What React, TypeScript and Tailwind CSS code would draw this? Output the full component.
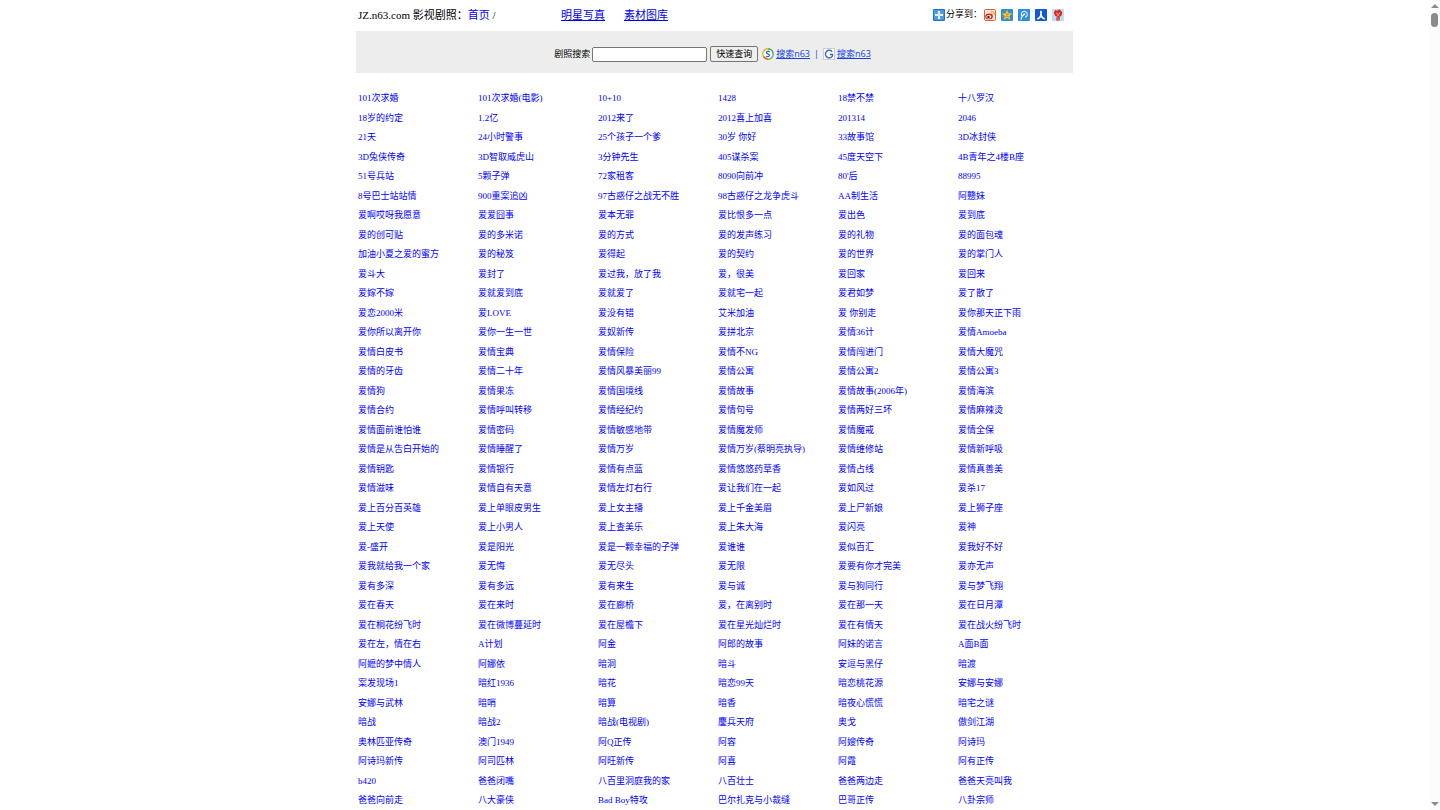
const rows: string[][] = [
  ['101次求婚', '101次求婚(电影)', '10+10', '1428', '18禁不禁', '十八罗汉'],
  ['18岁的约定', '1.2亿', '2012来了', '2012喜上加喜', '201314', '2046'],
  ['21天', '24小时警事', '25个孩子一个爹', '30岁 你好', '33故事馆', '3D冰封侠'],
  ['3D兔侠传奇', '3D智取威虎山', '3分钟先生', '405谋杀案', '45度天空下', '4B青年之4楼B座'],
  ['51号兵站', '5颗子弹', '72家租客', '8090向前冲', "80'后", '88995'],
  ['8号巴士站站情', '900重案追凶', '97古惑仔之战无不胜', '98古惑仔之龙争虎斗', 'AA制生活', '阿戆妹'],
  ['爱啊哎呀我愿意', '爱爱囧事', '爱本无罪', '爱比恨多一点', '爱出色', '爱到底'],
  ['爱的创可贴', '爱的多米诺', '爱的方式', '爱的发声练习', '爱的礼物', '爱的面包魂'],
  ['加油小夏之爱的蜜方', '爱的秘笈', '爱得起', '爱的契约', '爱的世界', '爱的掌门人'],
  ['爱斗大', '爱封了', '爱过我，放了我', '爱，很美', '爱回家', '爱回来'],
  ['爱嫁不嫁', '爱就爱到底', '爱就爱了', '爱就宅一起', '爱君如梦', '爱了散了'],
  ['爱恋2000米', '爱LOVE', '爱没有错', '艾米加油', '爱 你别走', '爱你那天正下雨'],
  ['爱你所以离开你', '爱你一生一世', '爱奴新传', '爱拼北京', '爱情36计', '爱情Amoeba'],
  ['爱情白皮书', '爱情宝典', '爱情保险', '爱情不NG', '爱情闯进门', '爱情大魔咒'],
  ['爱情的牙齿', '爱情二十年', '爱情风暴美丽99', '爱情公寓', '爱情公寓2', '爱情公寓3'],
  ['爱情狗', '爱情果冻', '爱情国境线', '爱情故事', '爱情故事(2006年)', '爱情海滨'],
  ['爱情合约', '爱情呼叫转移', '爱情经纪约', '爱情句号', '爱情两好三坏', '爱情麻辣烫'],
  ['爱情面前谁怕谁', '爱情密码', '爱情敏感地带', '爱情魔发师', '爱情魔戒', '爱情全保'],
  ['爱情是从告白开始的', '爱情睡醒了', '爱情万岁', '爱情万岁(蔡明亮执导)', '爱情维修站', '爱情新呼吸'],
  ['爱情钥匙', '爱情银行', '爱情有点蓝', '爱情悠悠药草香', '爱情占线', '爱情真善美'],
  ['爱情滋味', '爱情自有天意', '爱情左灯右行', '爱让我们在一起', '爱如风过', '爱杀17'],
  ['爱上百分百英雄', '爱上单眼皮男生', '爱上女主播', '爱上千金美眉', '爱上尸新娘', '爱上狮子座'],
  ['爱上天使', '爱上小男人', '爱上查美乐', '爱上朱大海', '爱闪亮', '爱神'],
  ['爱-盛开', '爱是阳光', '爱是一颗幸福的子弹', '爱谁谁', '爱似百汇', '爱我好不好'],
  ['爱我就给我一个家', '爱无悔', '爱无尽头', '爱无限', '爱要有你才完美', '爱亦无声'],
  ['爱有多深', '爱有多远', '爱有来生', '爱与诚', '爱与狗同行', '爱与梦飞翔'],
  ['爱在春天', '爱在来时', '爱在廊桥', '爱，在离别时', '爱在那一天', '爱在日月潭'],
  ['爱在桐花纷飞时', '爱在微博蔓延时', '爱在屋檐下', '爱在星光灿烂时', '爱在有情天', '爱在战火纷飞时'],
  ['爱在左，情在右', 'A计划', '阿金', '阿郎的故事', '阿妹的诺言', 'A面B面'],
  ['阿嬷的梦中情人', '阿娜依', '暗洞', '暗斗', '安逗与黑仔', '暗渡'],
  ['案发现场1', '暗红1936', '暗花', '暗恋99天', '暗恋桃花源', '安娜与安娜'],
  ['安娜与武林', '暗哨', '暗算', '暗香', '暗夜心慌慌', '暗宅之谜'],
  ['暗战', '暗战2', '暗战(电视剧)', '鏖兵天府', '奥戈', '傲剑江湖'],
  ['奥林匹亚传奇', '澳门1949', '阿Q正传', '阿容', '阿嫂传奇', '阿诗玛'],
  ['阿诗玛新传', '阿司匹林', '阿旺新传', '阿喜', '阿霞', '阿有正传'],
  ['b420', '爸爸闭嘴', '八百里洞庭我的家', '八百壮士', '爸爸两边走', '爸爸天亮叫我'],
  ['爸爸向前走', '八大豪侠', 'Bad Boy特攻', '巴尔扎克与小裁缝', '巴哥正传', '八卦宗师'],
]

function ShareIcon() {
  return (
    <svg viewBox="0 0 12 12" className="size-3">
      <rect width="12" height="12" rx="1" fill="#2373c8" />
      <rect x="1" y="1" width="10" height="10" rx="1" fill="#4b9be6" />
      <path d="M6 2v8M2 6h8" stroke="#fff" strokeWidth="2.2" />
      <path d="M6 3v6M3 6h6" stroke="#9fd0f7" strokeWidth=".6" />
    </svg>
  )
}

function WeiboIcon() {
  return (
    <svg viewBox="0 0 12 12" className="size-3">
      <rect x=".5" y=".5" width="11" height="11" rx="1" fill="#fde9dc" stroke="#d9623f" />
      <ellipse cx="5" cy="7.4" rx="3.8" ry="2.9" fill="#d9261c" />
      <ellipse cx="4.8" cy="7.7" rx="2.5" ry="1.8" fill="#fff" />
      <circle cx="4.5" cy="7.9" r="1.2" fill="#222" />
      <path d="M7 2.2a3 3 0 0 1 3.3 3.6M7 4a1.4 1.4 0 0 1 1.5 1.6" fill="none" stroke="#f08a1c" strokeWidth="1" />
    </svg>
  )
}

function QzoneIcon() {
  return (
    <svg viewBox="0 0 12 12" className="size-3">
      <rect width="12" height="12" rx="1" fill="#2f8fd6" />
      <path
        d="M6 .8l1.5 3.4 3.7.4-2.8 2.4.9 3.8L6 8.9l-3.3 1.9.9-3.8L.8 4.6l3.7-.4z"
        fill="#ffc928"
      />
      <path d="M4.3 5h3.2L4.6 7.7h3.3" fill="none" stroke="#e07a10" strokeWidth=".8" />
    </svg>
  )
}

function TencentIcon() {
  return (
    <svg viewBox="0 0 12 12" className="size-3">
      <rect width="12" height="12" rx="1" fill="#2f8fdb" />
      <path
        d="M4 7.2A3 3 0 1 1 7 8.2M3 10.8C3.100 8.500 4.300 6.500 6.200 5.400"
        fill="none"
        stroke="#e8f5ff"
        strokeWidth="1.1"
      />
      <circle cx="6.300" cy="5.200" r="1" fill="#e8f5ff" />
    </svg>
  )
}

function RenrenIcon() {
  return (
    <svg viewBox="0 0 12 12" className="size-3">
      <rect width="12" height="12" rx="1" fill="#1558d6" />
      <path d="M6 1.8V5C6 7.300 4.500 9.200 2.300 10M6 5c0 2.300 1.500 4.200 3.700 5" fill="none" stroke="#fff" strokeWidth="1.7" />
    </svg>
  )
}

function KaixinIcon() {
  return (
    <svg viewBox="0 0 12 12" className="size-3">
      <rect width="12" height="12" rx="1" fill="#b9def5" />
      <path d="M1.800 3.600L3.200 1l1.800.8L7 .6l2 1L10.300 4 9.200 7 6.500 8.300 3 6.800z" fill="#dc2a20" />
      <path d="M4.200 4.300h1.200M6.800 4.300H8M5 6h2" stroke="#fff" strokeWidth=".8" />
      <path d="M4.200 8.300h3.800L7.500 11.500h-3z" fill="#dc2a20" />
      <path d="M5.500 9.200l1 1.300" stroke="#fff" strokeWidth=".6" />
    </svg>
  )
}

function SosoIcon() {
  return (
    <svg viewBox="0 0 12 12" className="size-3">
      <circle cx="6" cy="6" r="5" fill="#fff" />
      <path d="M2 9.300A5.200 5.200 0 0 1 6 .8" fill="none" stroke="#f0b41c" strokeWidth="1.4" />
      <path d="M6 .8A5.200 5.200 0 0 1 11.200 6" fill="none" stroke="#41a842" strokeWidth="1.4" />
      <path d="M11.200 6A5.200 5.200 0 0 1 6 11.200" fill="none" stroke="#72b63c" strokeWidth="1.4" />
      <path d="M6 11.200a5.200 5.200 0 0 1-4.400-2.500" fill="none" stroke="#e2502b" strokeWidth="1.4" />
      <path d="M8 3.600C6.500 2.900 4.300 3.200 4.400 4.600 4.500 6 7.700 5.700 7.600 7.300 7.500 8.800 5.200 9 3.900 8.200" fill="none" stroke="#2a72d8" strokeWidth="1.3" />
    </svg>
  )
}

function GoogleIcon() {
  return (
    <svg viewBox="0 0 12 12" className="size-3">
      <rect x=".5" y=".5" width="11" height="11" fill="#fff" stroke="#c9cdd6" />
      <path d="M9.200 3.700A3.800 3.800 0 1 0 9.500 8V6.500H6.800" fill="none" stroke="#3a66c4" strokeWidth="1.4" />
    </svg>
  )
}

const shareTargets = [
  { name: '新浪微博', Icon: WeiboIcon },
  { name: 'QQ空间', Icon: QzoneIcon },
  { name: '腾讯微博', Icon: TencentIcon },
  { name: '人人网', Icon: RenrenIcon },
  { name: '开心网', Icon: KaixinIcon },
]

function Header() {
  return (
    <header className="flex h-[31px] items-center pr-[9px] pb-px pl-[2px] text-[11px]">
      <div className="w-[203px] whitespace-nowrap">
        JZ.n63.com 影视剧照：
        <a href="#" className="text-[#0000ff]">首页</a> /
      </div>
      <nav className="flex gap-[19px] text-[#0000ee] underline">
        <a href="#">明星写真</a>
        <a href="#">素材图库</a>
      </nav>
      <div className="ml-auto flex items-center text-[9px]">
        <a href="#" className="mr-[2px] flex items-center gap-px">
          <ShareIcon />
          分享到：
        </a>
        <div className="flex gap-[5px]">
          {shareTargets.map(({ name, Icon }) => (
            <a key={name} href="#" aria-label={name}>
              <Icon />
            </a>
          ))}
        </div>
      </div>
    </header>
  )
}

function SearchBar() {
  return (
    <form
      className="flex h-[42px] items-center justify-center bg-[#ededed] pt-1 pr-1 font-['Open_Sans','Noto_Sans_CJK_SC',sans-serif] text-[9px]"
      onSubmit={(e) => e.preventDefault()}
    >
      <label htmlFor="keyword">剧照搜索</label>
      <input
        id="keyword"
        type="text"
        className="ml-[2px] h-[15px] w-[115px] rounded-[2px] border border-[#767676] bg-white px-1"
      />
      <button
        type="submit"
        className="ml-[3px] h-4 w-12 rounded-[2px] border border-[#767676] bg-[#efefef] leading-3"
      >
        快速查询
      </button>
      <a href="#" className="ml-1 flex items-center gap-[2px] text-[#1040e8]">
        <SosoIcon />
        <span className="underline">搜索n63</span>
      </a>
      <span className="mx-1 w-[5px] text-right text-[#1040e8]">|</span>
      <a href="#" className="flex items-center gap-[2px] text-[#1040e8]">
        <GoogleIcon />
        <span className="underline">搜索n63</span>
      </a>
    </form>
  )
}

function Scrollbar() {
  return (
    <div className="flex w-[11px] shrink-0 flex-col items-center bg-[#fcfcfc] py-1" aria-hidden="true">
      <svg viewBox="0 0 8 4" className="h-1 w-2">
        <path d="M4 0l4 4H0z" fill="#8b8b8b" />
      </svg>
      <div className="mt-[5px] h-[14px] w-[7px] rounded-full bg-[#8b8b8b]" />
      <svg viewBox="0 0 8 4" className="mt-auto h-1 w-2">
        <path d="M4 4l4-4H0z" fill="#8b8b8b" />
      </svg>
    </div>
  )
}

export default function App() {
  return (
    <div
      lang="zh-CN"
      className="flex h-screen bg-white font-['Liberation_Serif','Noto_Sans_CJK_SC',serif] text-black"
    >
      <div className="min-w-0 flex-1 overflow-hidden">
        <div className="mx-auto max-w-[717px]">
          <Header />
          <SearchBar />
          {/* rows alternate between 20px and 19px */}
          <ul className="grid auto-rows-[20px_19px] grid-cols-[repeat(5,120px)_1fr] pt-[15px] pl-[2px] text-[9px] leading-5 text-[#0000ff]">
            {rows.flat().map((title) => (
              <li key={title} className="whitespace-nowrap">
                <a href="#">{title}</a>
              </li>
            ))}
          </ul>
        </div>
      </div>
      <Scrollbar />
    </div>
  )
}
